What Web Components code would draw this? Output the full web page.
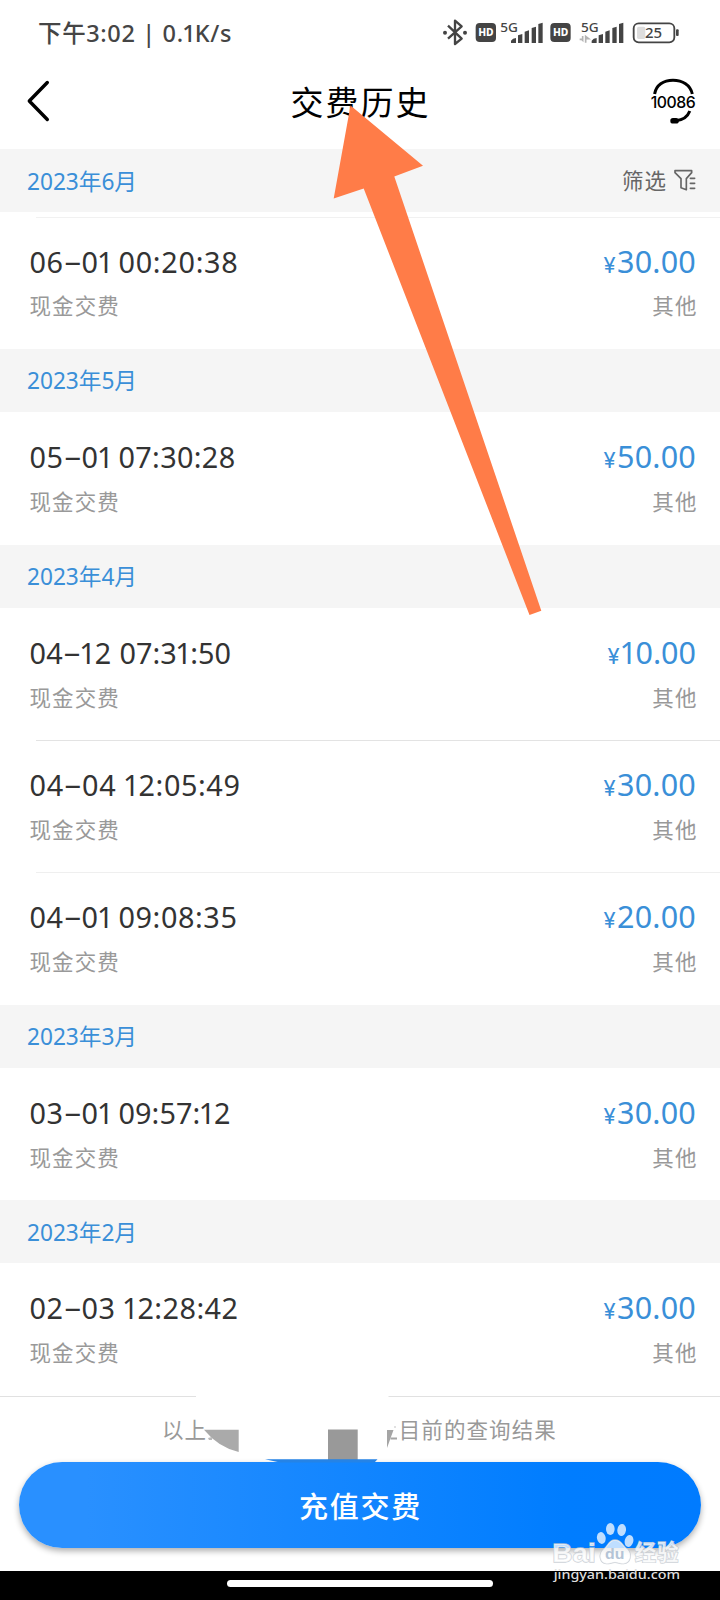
<!DOCTYPE html>
<html lang="zh-CN">
<head>
<meta charset="utf-8">
<title>交费历史</title>
<style>
html,body{margin:0;padding:0}
body{width:720px;height:1600px;overflow:hidden;background:#fff;font-family:"Noto Sans","Noto Sans CJK SC",sans-serif}
</style>
</head>
<body>
<history-page></history-page>
<script>
const CJK = '"Noto Sans CJK SC","Noto Sans",sans-serif';
class Base extends HTMLElement {
  constructor(){ super(); this.attachShadow({mode:'open'}); }
  connectedCallback(){ this.shadowRoot.innerHTML = this.render(); }
}
const define = (name, render) => customElements.define(name, class extends Base { render(){ return render(this); } });

// A single line of text whose tracking is adjusted until it is `w` pixels wide.
customElements.define('fit-text', class extends Base {
  connectedCallback(){
    const t = this.getAttribute('text');
    const html = t.replace(/[1-]/g, c => c === '1' ? '<i>1</i>' : '<b>-</b>');
    this.shadowRoot.innerHTML = `<style>:host{display:inline-block;white-space:pre}
      i{font-style:normal;margin:0 -1.5px 0 -1.5px}
      b{font-weight:400;display:inline-block;transform:translateX(.5px) scaleX(2) translateY(-1px);margin:0 4px}</style><span>${html}</span>`;
    const s = this.shadowRoot.querySelector('span');
    const w = +this.getAttribute('w');
    if (!w) return;
    this.style.letterSpacing = (w - s.getBoundingClientRect().width) / t.length + 'px';
  }
});

define('status-bar', () => `<style>
  :host{display:flex;height:64px;justify-content:space-between;align-items:flex-start;color:#454545}
  .l{padding:12px 0 0 38px;font-size:23.5px;line-height:42px;font-weight:500}
  svg{display:block;width:290px;height:50px}
  text{font-family:"Noto Sans",sans-serif}
  </style>
  <div class="l"><fit-text text="下午3:02 | 0.1K/s" w="194"></fit-text></div>
  <svg viewBox="0 0 870 150" fill="#444">
    <path d="M54 77L95 116L75 132V62L95 79L54 116" fill="none" stroke="#444" stroke-width="7" stroke-linejoin="round"/>
    <circle cx="45" cy="98" r="6"/><circle cx="105" cy="98" r="6"/>
    <rect x="137" y="69" width="61" height="57" rx="12"/><text x="145" y="109" font-size="31" font-weight="800" fill="#fff" textLength="46">HD</text>
    <text x="211" y="95" font-size="39" font-weight="500" textLength="53" lengthAdjust="spacingAndGlyphs">5G</text>
    <path d="M243 129v-7q5-8 15-8v15zM264 106l13-4v27h-13zM284 95l13-4v38h-13zM305 84l13-4v49h-13zM325 72l13-4v61h-13z"/>
    <rect x="361" y="69" width="61" height="57" rx="12"/><text x="369" y="109" font-size="31" font-weight="800" fill="#fff" textLength="46">HD</text>
    <text x="453" y="95" font-size="39" font-weight="500" textLength="53" lengthAdjust="spacingAndGlyphs">5G</text>
    <path d="M485 129v-7q5-8 15-8v15zM506 106l13-4v27h-13zM526 95l13-4v38h-13zM547 84l13-4v49h-13zM567 72l13-4v61h-13z"/>
    <path d="M449 118h6l3 3v-13M467 128v-19l9 7h-7" fill="none" stroke="#b4b4b4" stroke-width="5"/>
    <rect x="621" y="80" width="25" height="37" rx="5" fill="#ddd"/>
    <rect x="611" y="70" width="122" height="57" rx="15" fill="none" stroke="#444" stroke-width="5.5"/>
    <rect x="738" y="88" width="8" height="20" rx="3"/>
    <text x="645" y="115" font-size="45" font-weight="500" textLength="51">25</text>
  </svg>`);

define('nav-bar', () => `<style>
  :host{display:grid;grid-template-columns:150px 1fr 150px;height:85px;color:#000}
  h1{margin:0;padding-left:1px;text-align:center;font:400 33px/74px ${CJK};letter-spacing:2px}
  svg{display:block;width:150px;height:85px}
  </style>
  <svg viewBox="0 64 150 85"><path d="M47.3 82.5L29.3 101L47.3 119.5" fill="none" stroke="#000" stroke-width="3.4" stroke-linecap="round" stroke-linejoin="round"/></svg>
  <h1>交费历史</h1>
  <svg viewBox="570 64 150 85"><g fill="none" stroke="#000" stroke-width="3" stroke-linecap="butt">
    <path d="M654.6 94C656 85 663.5 80.2 673 80.2S690.500 85 692.300 94"/><path d="M689.8 111C687.500 117 683.500 120 676 120.700"/></g>
    <rect x="670.300" y="118" width="8.500" height="5.600" rx="2.700"/>
    <text x="650.700" y="107.900" font-family="Inter" font-size="15.800" font-weight="500" textLength="45">10086</text></svg>`);

define('month-head', e => `<style>
  :host{display:flex;height:63.4px;background:#f5f5f5;padding:0 24px 0 27px;justify-content:space-between;box-sizing:border-box}
  .m{color:#3a8fd8;font-size:22.700px;line-height:62px;padding-top:1.500px;height:60px}
  .f{display:flex;color:#666;font:400 21.500px/62px ${CJK};letter-spacing:1px}
  svg{display:block;width:22px;height:22px;margin:20px 0 0 7px}
  </style>
  <div class="m"><fit-text text="${e.getAttribute('month')}" w="110"></fit-text></div>
  ${e.hasAttribute('filter') ? `<div class="f"><span>筛选</span>
  <svg viewBox="347 87 66 66" fill="none" stroke="#666" stroke-width="5" stroke-linejoin="round" stroke-linecap="round"><path d="M350 92H400V98L384 116V149L368 143V116L350 98ZM396 115H409M396 130H409M396 145H409"/></svg></div>` : ''}`);

define('payment-row', e => {
  const g = n => e.getAttribute(n);
  return `<style>
  :host{display:block;height:132.2px;box-sizing:border-box;position:relative}
  hr{position:absolute;left:36px;right:0;top:0;margin:0;border:0;height:1px;background:var(--line,#e3e3e3)}
  .r{display:flex;justify-content:space-between;padding:0 24px 0 29.500px}
  .a{padding-top:24px;height:40px;line-height:40px;font-size:28.800px;color:#333;align-items:baseline}
  .t{display:flex}.t fit-text+fit-text{margin-left:${g('gap')}px}
  .p{color:#3a8fd8;font-size:30.500px;display:flex;align-items:baseline}
  .y{font-size:22px;margin-right:1.500px;font-family:Inter}
  .b{font:400 21.500px/32px ${CJK};letter-spacing:1.100px;color:#999;padding-top:8.700px;padding-right:22.500px}
  </style>${e.hasAttribute('line') ? '<hr>' : ''}
  <div class="r a"><div class="t"><fit-text text="${g('date')}" w="${g('dw')}"></fit-text><fit-text text="${g('time')}" w="${g('tw')}"></fit-text></div>
  <div class="p"><span class="y">¥</span><fit-text text="${g('amount')}" w="${g('amount')[0]==='1'?75:79}"></fit-text></div></div>
  <div class="r b"><span>现金交费</span><span>其他</span></div>`;
});

define('result-note', () => `<style>
  :host{display:block;height:66px;position:relative;color:#999;font:400 21.500px/32px ${CJK};letter-spacing:1.100px}
  .row{display:flex;padding:17px 0 0 162px}
  .row span+span{margin-left:191.500px}
  svg{position:absolute;left:0;top:0;width:720px;height:67px}
  </style>
  <div class="row"><span>以上</span><span>目前的查询结果</span></div>
  <svg viewBox="0 1396 720 67"><path d="M0 1396.500H196M388.500 1396.500H720" stroke="#e1e1e1"/>
  <path d="M204 1429.700H238.700V1452Q218 1447 204 1429.700Z" fill="#aaa"/><path d="M208 1438l4-1v3h-3z" fill="#bbb"/>
  <path d="M328 1429.500H357.700V1460H328Z" fill="#999"/>
  <path d="M387 1430H393.500L387 1448ZM391 1437.500h6v2h-6.500z" fill="#a5a5a5"/><circle cx="395" cy="1427" r=".8" fill="#bbb"/>
  <path d="M265 1459.300H377.500L374.500 1462.500H280Z" fill="#2583e6"/></svg>`);

define('pay-button', () => `<style>
  :host{display:block;height:109px;padding:0 19px;box-sizing:border-box}
  button{display:block;width:682px;height:86px;border:0;border-radius:43px;padding:0 0 0 1px;color:#fff;background:linear-gradient(90deg,#2990ff 0,#2990ff 10%,#007dff 80%,#007bff);box-shadow:0 3px 6px rgba(0,0,0,.32);font:500 29px/86px ${CJK};letter-spacing:1.700px}
  </style><button>充值交费</button>`);

define('home-bar', () => `<style>
  :host{display:flex;height:29px;background:#000;justify-content:center;align-items:flex-start}
  div{margin-top:9px;width:266px;height:7px;border-radius:4px;background:#fff}
  </style><div></div>`);

define('pointer-arrow', () => `<style>:host{position:absolute;left:0;top:0;pointer-events:none}svg{display:block}</style>
  <svg width="720" height="640"><path d="M350.500 105.500L423 165.800L394.300 176.500L541.300 610.800L529.500 615L363.700 188.500L333.700 198.600Z" fill="#ff7c48"/></svg>`);

define('site-watermark', () => `<style>:host{position:absolute;left:540px;top:1515px;pointer-events:none}svg{display:block}
  .o{fill:#fff;fill-opacity:.75;stroke:#c3c9d0;stroke-opacity:.85;stroke-width:4;paint-order:stroke}
  .p{fill:#fff;fill-opacity:.75}</style>
  <svg width="150" height="85" viewBox="540 405 450 255">
  <text class="o" x="577" y="545" font-family="Liberation Sans" font-weight="700" font-size="80" textLength="130" lengthAdjust="spacingAndGlyphs">Bai</text>
  <g class="p"><ellipse cx="724" cy="474" rx="13" ry="18" transform="rotate(-12 724 474)"/><ellipse cx="751" cy="447" rx="13" ry="18"/><ellipse cx="785" cy="450" rx="13" ry="18" transform="rotate(8 785 450)"/><ellipse cx="807" cy="483" rx="13" ry="18" transform="rotate(15 807 483)"/></g>
  <path class="o" d="M765 480C785 480 788 499 802 508C817 522 812 549 791 551C780 552 776 547 765 547S750 552 739 551C719 549 714 523 731 508C744 499 746 480 765 480Z"/>
  <text x="735" y="538" font-family="Liberation Sans" font-weight="700" font-size="42" textLength="58" lengthAdjust="spacingAndGlyphs" fill="#b4c4d6">du</text>
  <text class="o" x="824" y="541" font-family="Noto Sans CJK SC" font-weight="700" font-size="64" textLength="132">经验</text>
  <text x="581" y="598" font-family="Noto Sans" font-weight="500" font-size="39" fill="#ddd" textLength="379" lengthAdjust="spacingAndGlyphs">jingyan.baidu.com</text></svg>`);

const data = [
  ['2023年6月', [['06-01',83,'00:20:38',120,6,'30.00']]],
  ['2023年5月', [['05-01',83,'07:30:28',117,6,'50.00']]],
  ['2023年4月', [['04-12',82,'07:31:50',111.5,8,'10.00'],['04-04',87,'12:05:49',116,8,'30.00'],['04-01',83,'09:08:35',119,6,'20.00']]],
  ['2023年3月', [['03-01',83,'09:57:12',112,6,'30.00']]],
  ['2023年2月', [['02-03',86,'12:28:42',115,8,'30.00']]]
];
define('payment-list', () => `<style>:host{display:block;height:1247px}payment-row.first{margin-top:4.400px;--line:#f1f1f1}</style>` +
  data.map(([m, rows], k) => `<month-head month="${m}"${k ? '' : ' filter'}></month-head>` + rows.map((r, i) =>
  `<payment-row${k ? '' : ' class="first"'}${i === 2 ? ' style="--line:#efefef"' : ''}${!k || i ? ' line' : ''} date="${r[0]}" dw="${r[1]}" time="${r[2]}" tw="${r[3]}" gap="${r[4]}" amount="${r[5]}"></payment-row>`).join('')).join(''));

define('history-page', () => `<style>:host{display:flex;flex-direction:column;position:relative;width:720px;height:1600px;background:#fff}</style>
  <status-bar></status-bar><nav-bar></nav-bar><payment-list></payment-list><result-note></result-note><pay-button></pay-button><home-bar></home-bar>
  <pointer-arrow></pointer-arrow><site-watermark></site-watermark>`);
</script>
</body>
</html>
